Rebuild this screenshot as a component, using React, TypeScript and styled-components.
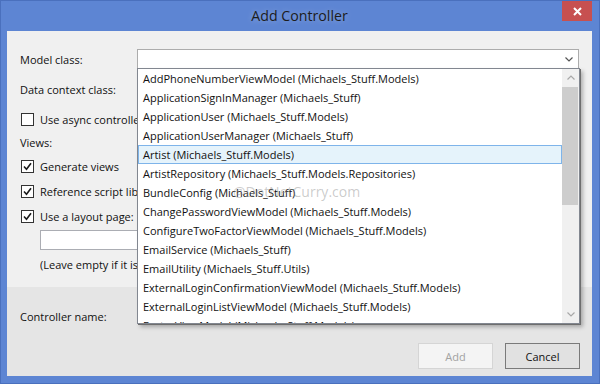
import React from "react";
import styled, { createGlobalStyle } from "styled-components";

const FONT = `"Open Sans", "Noto Sans", sans-serif`;

const Global = createGlobalStyle`
  html, body { margin: 0; padding: 0; background: #5d85d3; }
  body { font-family: ${FONT}; }
`;

const Window = styled.div`
  position: relative;
  width: 600px;
  height: 384px;
  box-sizing: border-box;
  padding: 0 8px 8px 7px;
  display: flex;
  flex-direction: column;
  background: #5d85d3;
  box-shadow: inset 0 0 0 1px #4a70bd;
  font-family: ${FONT};
  color: #111;
  overflow: hidden;
`;

const TitleBar = styled.div`
  height: 31px;
  flex: none;
  display: grid;
  grid-template-columns: 1fr auto 1fr;
  align-items: start;
`;

const TitleText = styled.div`
  grid-column: 2;
  height: 31px;
  line-height: 31px;
  font-size: 14.2px;
  color: #1c1c1c;
  text-shadow: 0 0 6px rgba(255, 255, 255, 0.35);
`;

const CloseButton = styled.div`
  grid-column: 3;
  justify-self: end;
  margin-top: 1px;
  width: 30px;
  height: 20px;
  background: #c75050;
  display: flex;
  align-items: center;
  justify-content: center;
`;

const Body = styled.div`
  flex: 1;
  display: flex;
  flex-direction: column;
  background: #f0f0f0;
  font-size: 11px;
`;

const Main = styled.div`
  flex: 1;
  display: flex;
  flex-direction: column;
  padding: 18px 13px 0 13px;
`;

const Row = styled.div<{ $mt: number; $h?: number; $indent?: number }>`
  display: flex;
  align-items: center;
  height: ${(p) => p.$h ?? 20}px;
  margin-top: ${(p) => p.$mt}px;
  padding-left: ${(p) => p.$indent ?? 0}px;
  white-space: nowrap;
`;

const Label = styled.div`
  width: 117px;
  flex: none;
`;

/* text that runs under the open drop-down is cut where the list begins */
const Clipped = styled.span<{ $w: number }>`
  display: block;
  width: ${(p) => p.$w}px;
  overflow: hidden;
  white-space: nowrap;
`;

const Combo = styled.div`
  position: relative;
  flex: 1;
  height: 20px;
  box-sizing: border-box;
  border: 1px solid #acacac;
  background: #fff;
  display: flex;
  align-items: center;
  justify-content: flex-end;
  padding-right: 5px;
`;

const TextBox = styled.div<{ $w: number }>`
  width: ${(p) => p.$w}px;
  height: 20px;
  box-sizing: border-box;
  border: 1px solid #abadb3;
  background: #fff;
`;

const CheckRow = styled(Row)`
  gap: 6px;
  padding-left: 1px;
`;

const Box = styled.div`
  width: 13px;
  height: 13px;
  box-sizing: border-box;
  border: 1px solid #333;
  background: #fff;
  display: flex;
  align-items: center;
  justify-content: center;
  flex: none;
`;

const List = styled.div`
  position: absolute;
  z-index: 5;
  top: 100%;
  left: -1px;
  width: 443px;
  height: 256px;
  box-sizing: border-box;
  border: 1px solid #828790;
  background: #fff;
  display: flex;
  box-shadow: 1px 1px 0 #6e6e6e, 3px 3px 4px rgba(0, 0, 0, 0.28);
  color: #111;
`;

const Items = styled.div`
  flex: 1;
  overflow: hidden;
`;

const Item = styled.div<{ $hot?: boolean }>`
  height: 19px;
  box-sizing: border-box;
  padding-left: ${(p) => (p.$hot ? 4 : 5)}px;
  white-space: nowrap;
  background: ${(p) => (p.$hot ? "#e5f3fb" : "transparent")};
  border: ${(p) => (p.$hot ? "1px solid #7eb4ea" : "none")};
  line-height: ${(p) => (p.$hot ? 17 : 19)}px;
`;

const ScrollBar = styled.div`
  width: 17px;
  flex: none;
  background: #f0f0f0;
  display: flex;
  flex-direction: column;
`;

const ScrollButton = styled.div`
  height: 17px;
  flex: none;
  display: flex;
  align-items: center;
  justify-content: center;
`;

const Thumb = styled.div`
  height: 118px;
  margin: 1px 1px 0 0;
  background: #cdcdcd;
`;

const Track = styled.div`
  flex: 1;
`;

const Watermark = styled.div`
  position: absolute;
  left: 95px;
  top: 113px;
  font-size: 14px;
  color: rgba(140, 140, 140, 0.45);
  pointer-events: none;
  white-space: nowrap;
`;

const Footer = styled.div`
  height: 89px;
  flex: none;
  box-sizing: border-box;
  background: #e5e5e5;
  padding: 19px 12px 7px 13px;
  display: flex;
  flex-direction: column;
`;

const Buttons = styled.div`
  margin-top: 17px;
  display: flex;
  justify-content: flex-end;
  gap: 12px;
`;

const Button = styled.div<{ $disabled?: boolean }>`
  width: 75px;
  height: 26px;
  box-sizing: border-box;
  display: flex;
  align-items: center;
  justify-content: center;
  background: ${(p) => (p.$disabled ? "#f4f4f4" : "#e1e1e1")};
  border: 1px solid ${(p) => (p.$disabled ? "#d5d5d5" : "#7a7a7a")};
  color: ${(p) => (p.$disabled ? "#a2a2a2" : "#111")};
`;

const Chevron = ({ up, color }: { up?: boolean; color: string }) => (
  <svg width="8" height="5" viewBox="0 0 8 5">
    <polyline
      points={up ? "0.5,4.5 4,1 7.5,4.5" : "0.5,0.5 4,4 7.5,0.5"}
      fill="none"
      stroke={color}
      strokeWidth="1.2"
    />
  </svg>
);

const Check = () => (
  <svg width="9" height="9" viewBox="0 0 9 9">
    <polyline points="1,4.5 3.5,7.2 8,1.2" fill="none" stroke="#1a1a1a" strokeWidth="1.6" />
  </svg>
);

const items = [
  "AddPhoneNumberViewModel (Michaels_Stuff.Models)",
  "ApplicationSignInManager (Michaels_Stuff)",
  "ApplicationUser (Michaels_Stuff.Models)",
  "ApplicationUserManager (Michaels_Stuff)",
  "Artist (Michaels_Stuff.Models)",
  "ArtistRepository (Michaels_Stuff.Models.Repositories)",
  "BundleConfig (Michaels_Stuff)",
  "ChangePasswordViewModel (Michaels_Stuff.Models)",
  "ConfigureTwoFactorViewModel (Michaels_Stuff.Models)",
  "EmailService (Michaels_Stuff)",
  "EmailUtility (Michaels_Stuff.Utils)",
  "ExternalLoginConfirmationViewModel (Michaels_Stuff.Models)",
  "ExternalLoginListViewModel (Michaels_Stuff.Models)",
  "FactorViewModel (Michaels_Stuff.Models)",
];

export default function App() {
  return (
    <>
      <Global />
      <Window>
        <TitleBar>
          <TitleText>Add Controller</TitleText>
          <CloseButton>
            <svg width="9" height="9" viewBox="0 0 9 9">
              <path d="M1 1 L8 8 M8 1 L1 8" stroke="#fff" strokeWidth="2" />
            </svg>
          </CloseButton>
        </TitleBar>
        <Body>
          <Main>
            <Row $mt={0}>
              <Label>Model class:</Label>
              <Combo>
                <Chevron color="#555" />
                <List>
                  <Items>
                    {items.map((t, i) => (
                      <Item key={t} $hot={i === 4}>
                        {t}
                      </Item>
                    ))}
                  </Items>
                  <ScrollBar>
                    <ScrollButton>
                      <Chevron up color="#a8a8a8" />
                    </ScrollButton>
                    <Thumb />
                    <Track />
                    <ScrollButton>
                      <Chevron color="#a8a8a8" />
                    </ScrollButton>
                  </ScrollBar>
                  <Watermark>@DotNetCurry.com</Watermark>
                </List>
              </Combo>
            </Row>
            <Row $mt={10}>
              <Label>Data context class:</Label>
            </Row>
            <CheckRow $mt={10}>
              <Box />
              <Clipped $w={97}>Use async controller actions</Clipped>
            </CheckRow>
            <Row $mt={3}>Views:</Row>
            <CheckRow $mt={4}>
              <Box>
                <Check />
              </Box>
              Generate views
            </CheckRow>
            <CheckRow $mt={5}>
              <Box>
                <Check />
              </Box>
              <Clipped $w={97}>Reference script libraries</Clipped>
            </CheckRow>
            <CheckRow $mt={5}>
              <Box>
                <Check />
              </Box>
              Use a layout page:
            </CheckRow>
            <Row $mt={4} $indent={20}>
              <TextBox $w={440} />
            </Row>
            <Row $mt={4} $indent={20}>
              <Clipped $w={97}>(Leave empty if it is set in a Razor _viewstart file)</Clipped>
            </Row>
          </Main>
          <Footer>
            <Row $mt={0}>
              <Label>Controller name:</Label>
            </Row>
            <Buttons>
              <Button $disabled>Add</Button>
              <Button>Cancel</Button>
            </Buttons>
          </Footer>
        </Body>
      </Window>
    </>
  );
}
